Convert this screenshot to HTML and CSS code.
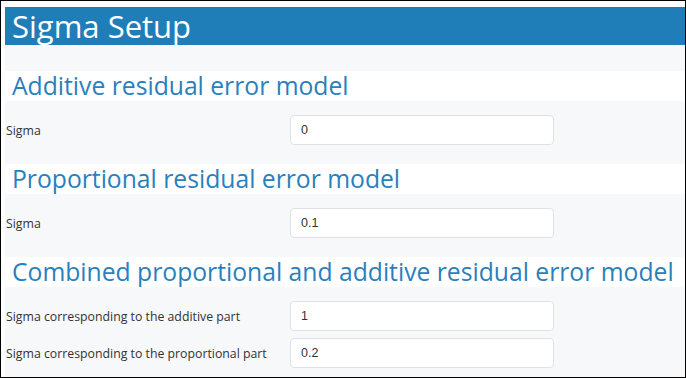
FILE: index.html
```html
<!DOCTYPE html>
<html lang="en">
<head>
    <meta charset="UTF-8">
    <meta name="viewport" content="width=device-width, initial-scale=1.0">
    <title>Sigma Setup</title>
    <link rel="stylesheet" href="styles.css">
</head>
<body>
    <div class="frame">
        <div class="panel">
            <h1 class="title">Sigma Setup</h1>

            <div class="section">
                <h3 class="section-title">Additive residual error model</h3>
                <div class="row">
                    <label class="label" for="sigmaAdd">Sigma</label>
                    <input id="sigmaAdd" class="field" type="text" value="0">
                </div>
            </div>

            <div class="section">
                <h3 class="section-title">Proportional residual error model</h3>
                <div class="row">
                    <label class="label" for="sigmaProp">Sigma</label>
                    <input id="sigmaProp" class="field" type="text" value="0.1">
                </div>
            </div>

            <div class="section">
                <h3 class="section-title">Combined proportional and additive residual error model</h3>
                <div class="row">
                    <label class="label" for="sigmaCombAdd">Sigma corresponding to the additive part</label>
                    <input id="sigmaCombAdd" class="field" type="text" value="1">
                </div>
                <div class="row">
                    <label class="label" for="sigmaCombProp">Sigma corresponding to the proportional part</label>
                    <input id="sigmaCombProp" class="field" type="text" value="0.2">
                </div>
            </div>
        </div>
    </div>
</body>
</html>
```

FILE: styles.css
```css
body {
    margin: 0;
    font-family: 'Open Sans', sans-serif;
    color: #333;
}
.frame {
    box-sizing: border-box;
    width: 686px;
    height: 378px;
    border: 1px solid #000;
    background-color: #fff;
    padding: 6px 0 0 4px;
    overflow: hidden;
}
.panel {
    background-color: #f7f8fa;
    min-height: 100%;
}
.title {
    margin: 0;
    height: 38px;
    padding-left: 7px;
    background-color: #1f7eb8;
    color: #fff;
    font-size: 31px;
    font-weight: 400;
    line-height: 38px;
}
.section {
    padding-top: 26px;
}
.section + .section {
    padding-top: 12px;
}
.section-title {
    margin: 0 0 14px;
    height: 30px;
    padding-left: 7px;
    background-color: #fff;
    color: #2a7fbd;
    font-size: 24.7px;
    font-weight: 400;
    line-height: 30px;
    white-space: nowrap;
}
.row {
    display: flex;
    align-items: center;
    margin-bottom: 7px;
}
.label {
    width: 284px;
    padding-left: 1px;
    font-size: 12.3px;
    white-space: nowrap;
}
.field {
    box-sizing: border-box;
    width: 264px;
    height: 30px;
    padding: 0 10px;
    border: 1px solid #dee2e6;
    border-radius: 4px;
    background-color: #fff;
    color: #333;
    font-family: 'Liberation Sans', sans-serif;
    font-size: 12.5px;
}
```
